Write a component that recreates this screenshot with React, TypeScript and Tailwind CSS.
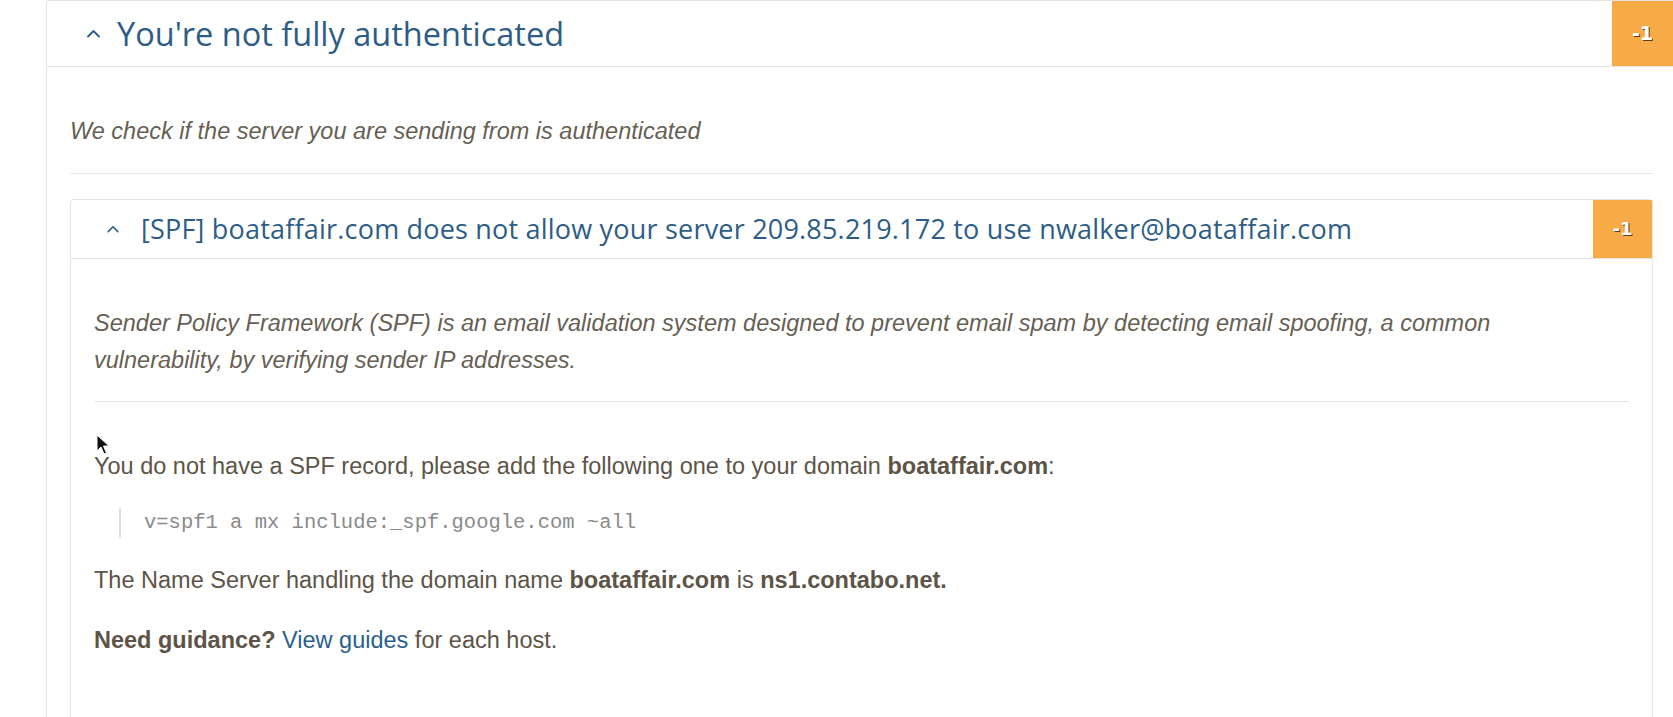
import React from 'react';

const Chevron = ({className}: {className: string}) => (
  <svg viewBox="0 0 16 9" className={className} fill="none" stroke="currentColor" strokeWidth="1.8" strokeLinecap="round" strokeLinejoin="round">
    <polyline points="2.5,7.5 8,2 13.5,7.5" />
  </svg>
);

const Badge = ({className}: {className: string}) => (
  <div className={`flex shrink-0 items-center justify-center bg-[#f8aa46] font-['DejaVu_Sans',sans-serif] font-bold text-white [text-shadow:1px_1px_0_#5a4020] ${className}`}>
    -1
  </div>
);

export default function App() {
  return (
    <div className="relative h-[717px] w-full overflow-hidden bg-white font-['Liberation_Sans',Arial,sans-serif] text-[23.5px] leading-[37.5px] text-[#5d5447]">
      <div className="ml-[46px] w-[1627px] rounded-tl border-y border-l border-[#e4e4e4]">
        {/* outer header */}
        <div className="flex h-[66px] border-b border-[#e4e4e4]">
          <div className="flex flex-1 items-center pl-[38px]">
            <Chevron className="h-[9px] w-[17px] text-[#2d5d87]" />
            <h2 className="ml-[15px] font-['Open_Sans',sans-serif] text-[32.5px] text-[#2d5d87]">
              You're not fully authenticated
            </h2>
          </div>
          <Badge className="w-[61px] text-[19px]" />
        </div>

        <div className="pl-[23px] pr-[20px]">
          <p className="pt-[46px] italic text-[#675f54]">We check if the server you are sending from is authenticated</p>
          <hr className="mt-[22px] border-t border-[#e6e6e6]" />

          {/* inner card */}
          <div className="mt-[25px] rounded-t border border-[#e4e4e4]">
            <div className="flex h-[59px] border-b border-[#e4e4e4]">
              <div className="flex flex-1 items-center pl-[35px]">
                <Chevron className="h-[8px] w-[14px] text-[#2d5d87]" />
                <h3 className="ml-[21px] font-['Open_Sans',sans-serif] text-[27px] tracking-[0.2px] text-[#2d5d87]">
                  [SPF] boataffair.com does not allow your server 209.85.219.172 to use nwalker@boataffair.com
                </h3>
              </div>
              <Badge className="w-[59px] text-[18px]" />
            </div>

            <div className="px-[23px] pb-[60px]">
              <p className="pr-[24px] pt-[46px] italic text-[#675f54]">
                Sender Policy Framework (SPF) is an email validation system designed to prevent email spam by detecting email spoofing, a common vulnerability, by verifying sender IP addresses.
              </p>
              <hr className="mt-[21px] border-t border-[#e6e6e6]" />

              <p className="mt-[46px]">
                You do not have a SPF record, please add the following one to your domain <b>boataffair.com</b>:
              </p>
              <blockquote className="ml-[25px] mt-[23px] border-l-2 border-[#e0e0e0] pl-[23px] font-['Liberation_Mono',monospace] text-[20.5px] leading-[30px] text-[#8a8a8a]">
                v=spf1 a mx include:_spf.google.com ~all
              </blockquote>
              <p className="mt-[24px]">
                The Name Server handling the domain name <b>boataffair.com</b> is <b>ns1.contabo.net.</b>
              </p>
              <p className="mt-[22px]">
                <b>Need guidance?</b> <a className="text-[#2b5f8e]">View guides</a> for each host.
              </p>
            </div>
          </div>
        </div>
      </div>

      {/* mouse pointer */}
      <svg className="absolute left-[96px] top-[434px] h-[22px] w-[14px]" viewBox="0 0 14 22">
        <path d="M1 1 L1 17 L5 13 L8 20 L10.5 19 L7.5 12 L13 12 Z" fill="#111" stroke="#fff" strokeWidth="1" strokeLinejoin="round" />
      </svg>
    </div>
  );
}
